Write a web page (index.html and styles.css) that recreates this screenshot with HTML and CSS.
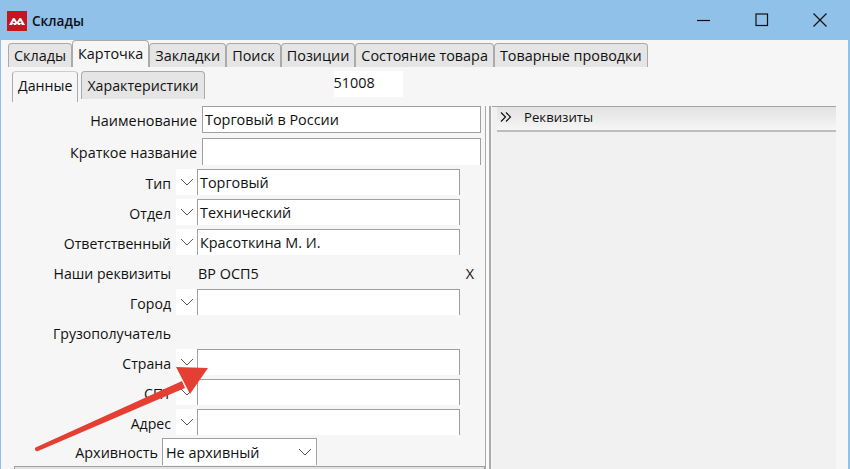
FILE: index.html
```html
<!DOCTYPE html>
<html lang="ru">
<head>
<meta charset="utf-8">
<title>Склады</title>
<link rel="stylesheet" href="styles.css">
</head>
<body>
<div class="window">
  <header class="titlebar">
    <svg class="logo" width="20" height="20" viewBox="0 0 20 20"><rect width="20" height="20" fill="#c4161c"/><path d="M2 14 6 7h1.500l2.500 4 2.500-4H14l4 7h-3l-1-1.500-1 1.500h-2l-1-1.500-1 1.500H7l-1-1.500L5 14z" fill="#fff"/><path d="M5.800 10.500h2v1.500h-2zM12.200 10.500h2v1.500h-2z" fill="#c4161c"/></svg>
    <span class="title">Склады</span>
    <div class="controls">
      <svg width="14" height="14" viewBox="0 0 14 14"><path d="M0 7.500h13" stroke="#111" stroke-width="1.200"/></svg>
      <svg width="14" height="14" viewBox="0 0 14 14"><rect x="1" y="1" width="11.500" height="11.500" fill="none" stroke="#111" stroke-width="1.200"/></svg>
      <svg width="14" height="14" viewBox="0 0 14 14"><path d="M.5.500l13 13M13.500.5l-13 13" stroke="#111" stroke-width="1.200"/></svg>
    </div>
  </header>
  <div class="body">
    <nav class="tabs">
      <span class="tab">Склады</span>
      <span class="tab active">Карточка</span>
      <span class="tab">Закладки</span>
      <span class="tab">Поиск</span>
      <span class="tab">Позиции</span>
      <span class="tab">Состояние товара</span>
      <span class="tab">Товарные проводки</span>
    </nav>
    <div class="subbar">
      <nav class="subtabs">
        <span class="subtab active">Данные</span>
        <span class="subtab">Характеристики</span>
      </nav>
      <div class="code">51008</div>
    </div>
    <div class="split">
      <section class="form">
        <div class="row wide"><label>Наименование</label><div class="field">Торговый в России</div></div>
        <div class="row wide short"><label>Краткое название</label><div class="field open"></div></div>
        <div class="row"><label>Тип</label><span class="chev"><svg width="14" height="8" viewBox="0 0 14 8"><path d="M1 1l6 6 6-6"/></svg></span><div class="field">Торговый</div></div>
        <div class="row"><label>Отдел</label><span class="chev"><svg width="14" height="8" viewBox="0 0 14 8"><path d="M1 1l6 6 6-6"/></svg></span><div class="field">Технический</div></div>
        <div class="row"><label>Ответственный</label><span class="chev"><svg width="14" height="8" viewBox="0 0 14 8"><path d="M1 1l6 6 6-6"/></svg></span><div class="field">Красоткина М. И.</div></div>
        <div class="row plain"><label>Наши реквизиты</label><span class="value">ВР ОСП5</span><span class="clear">Х</span></div>
        <div class="row"><label>Город</label><span class="chev"><svg width="14" height="8" viewBox="0 0 14 8"><path d="M1 1l6 6 6-6"/></svg></span><div class="field"></div></div>
        <div class="row plain"><label>Грузополучатель</label></div>
        <div class="row"><label>Страна</label><span class="chev"><svg width="14" height="8" viewBox="0 0 14 8"><path d="M1 1l6 6 6-6"/></svg></span><div class="field"></div></div>
        <div class="row"><label>СПТ</label><span class="chev"><svg width="14" height="8" viewBox="0 0 14 8"><path d="M1 1l6 6 6-6"/></svg></span><div class="field"></div></div>
        <div class="row"><label>Адрес</label><span class="chev"><svg width="14" height="8" viewBox="0 0 14 8"><path d="M1 1l6 6 6-6"/></svg></span><div class="field"></div></div>
        <div class="row archive"><label>Архивность</label><div class="select"><span>Не архивный</span><svg width="14" height="8" viewBox="0 0 14 8"><path d="M1 1l6 6 6-6"/></svg></div></div>
        <div class="bottom"></div>
      </section>
      <div class="splitter"></div>
      <aside class="panel">
        <div class="panel-head">
          <svg width="14" height="10" viewBox="0 0 14 10"><path d="M1 .5 5.500 5 1 9.500M6 .5 10.500 5 6 9.500" fill="none" stroke="#111" stroke-width="1.200"/></svg>
          <span>Реквизиты</span>
        </div>
      </aside>
    </div>
  </div>
  <svg class="arrow" width="190" height="95" viewBox="0 0 190 95">
    <path d="M8.500 84.500 155 18 158 25 11 88a2.200 2.200 0 0 1-2.500-3.500z" fill="#e53f33"/>
    <path d="M149 4 181 5 163 31z" fill="#e53f33"/>
  </svg>
</div>
</body>
</html>
```

FILE: styles.css
```css
html, body {
  margin: 0;
  padding: 0;
  height: 100%;
  overflow: hidden;
}
body {
  font-family: "Open Sans", "Noto Sans", "Liberation Sans", sans-serif;
  font-size: 14.4px;
  color: #111;
  background: #90c1e9;
}
.window {
  position: relative;
  height: 469px;
  padding: 0 2px 0 1px;
  box-sizing: border-box;
  display: flex;
  flex-direction: column;
}
.titlebar {
  height: 40px;
  flex: none;
  display: flex;
  align-items: center;
  padding-left: 6px;
}
.logo { margin-right: 5px; margin-top: 1px; }
.title {
  font-weight: 600;
  font-size: 13.6px;
  color: #0a0f1a;
}
.controls {
  margin-left: auto;
  display: flex;
  gap: 44px;
  padding-right: 21px;
}
.body {
  flex: 1;
  min-height: 0;
  background: #f6f6f6;
  overflow: hidden;
}
.tabs {
  display: flex;
  align-items: flex-end;
  height: 27px;
  padding-left: 7px;
}
.tab {
  height: 24px;
  line-height: 23px;
  padding: 0 5px;
  background: #e5e5e5;
  border: 1px solid #aaa;
  border-bottom: 0;
  border-radius: 4px 4px 0 0;
  box-sizing: border-box;
  white-space: nowrap;
}
.tab.active {
  height: 27px;
  line-height: 25px;
  background: #f6f6f6;
  margin: 0;
}
.subbar {
  display: flex;
  height: 39px;
}
.subtabs {
  display: flex;
  align-items: flex-start;
  padding: 4px 0 0 11px;
  font-size: 14.2px;
}
.subtab {
  height: 28px;
  line-height: 28px;
  padding: 0 5px;
  background: #e5e5e5;
  border: 1px solid #aaa;
  border-bottom: 0;
  border-radius: 4px 4px 0 0;
  box-sizing: border-box;
  margin-left: 3px;
  white-space: nowrap;
}
.subtab.active {
  height: 31px;
  background: #f6f6f6;
  margin-left: 0;
  line-height: 28px;
  border-top-color: #ccc;
}
.code {
  width: 69px;
  height: 26px;
  margin: 4px 0 0 129px;
  background: #fff;
  line-height: 23px;
  box-sizing: border-box;
}
.split {
  display: flex;
  height: 363px;
}
.form {
  width: 484px;
  flex: none;
  box-sizing: border-box;
  display: flex;
  flex-direction: column;
}
.row {
  display: flex;
  height: 26px;
  margin-bottom: 4px;
  align-items: stretch;
}
.row label {
  width: 170px;
  flex: none;
  text-align: right;
  line-height: 30px;
  white-space: nowrap;
  font-size: 14.1px;
}
.row.wide {
  height: 27px;
  margin-bottom: 5px;
}
.row.wide label { width: 196px; font-size: 14.4px; }
.row.wide .field { width: 279px; margin-left: 5px; }
.row.short { margin-bottom: 4px; }
.chev {
  width: 21px;
  margin-left: 5px;
  flex: none;
  background: #fff;
  display: flex;
  align-items: center;
  justify-content: center;
}
.chev svg path, .select svg path {
  fill: none;
  stroke: #555;
  stroke-width: 1;
}
.field {
  width: 263px;
  flex: none;
  box-sizing: border-box;
  background: #fff;
  border: 1px solid #a0a0a0;
  border-bottom: 0;
  line-height: 25px;
  padding-left: 2px;
  white-space: nowrap;
}
.row.wide .field { border-bottom: 1px solid #a0a0a0; }
.row.wide .field.open { border-bottom: 0; }
.row.plain {
  height: 30px;
  margin-bottom: 0;
}
.row.plain label { line-height: 30px; }
.value { margin-left: 27px; line-height: 30px; }
.clear { margin-left: auto; margin-right: 11px; line-height: 30px; }
.row.archive {
  height: 27px;
  margin: -1px 0 0;
}
.row.archive label { width: 157px; font-size: 14.4px; }
.select {
  width: 155px;
  margin-left: 4px;
  box-sizing: border-box;
  background: #fff;
  border: 1px solid #a0a0a0;
  border-bottom: 0;
  display: flex;
  align-items: center;
  justify-content: space-between;
  padding: 0 4px 0 3px;
}
.bottom {
  margin: 1px 0 0 13px;
  height: 4px;
  background: #e3e3e3;
  border: 1px solid #a0a0a0;
  border-bottom: 0;
}
.splitter {
  width: 6px;
  flex: none;
  margin-right: 1px;
  background: #fafafa;
  border-left: 1px solid #aaa;
  border-right: 2px solid #aaa;
  box-sizing: border-box;
}
.panel {
  width: 344px;
  flex: none;
  background: #f1f1f1;
  border-top: 1px solid #a5a5a5;
}
.panel-head {
  height: 19px;
  margin-left: 5px;
  display: flex;
  align-items: center;
  gap: 10px;
  padding: 0 0 4px 3px;
  background: linear-gradient(#e2e2e2, #f6f6f6);
  border-bottom: 2px solid #bdbdbd;
}
.panel-head span { font-size: 13.2px; }
.arrow {
  position: absolute;
  left: 27px;
  top: 363px;
}
```
